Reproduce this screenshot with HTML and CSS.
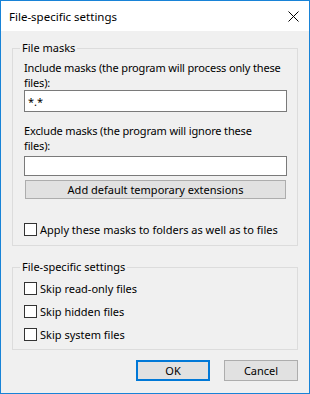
FILE: index.html
```html
<!DOCTYPE html>
<html lang="en">
<head>
    <meta charset="UTF-8">
    <title>File-specific settings</title>
    <link rel="stylesheet" href="styles.css">
</head>
<body>
    <div class="window">
        <div class="titlebar">
            <span class="title">File-specific settings</span>
            <span class="close">
                <svg width="11" height="11" viewBox="0 0 11 11"><path d="M0.5 0.5 L10.5 10.5 M10.5 0.5 L0.5 10.5" stroke="#000" stroke-width="1" fill="none"/></svg>
            </span>
        </div>
        <div class="content">
            <fieldset class="group masks">
                <legend>File masks</legend>
                <label class="field-label" for="include">Include masks (the program will process only these<br>files):</label>
                <input type="text" id="include" class="textbox tb-include" value="*.*">
                <label class="field-label lbl-exclude" for="exclude">Exclude masks (the program will ignore these<br>files):</label>
                <input type="text" id="exclude" class="textbox tb-exclude">
                <button class="btn btn-wide">Add default temporary extensions</button>
                <label class="check check-apply"><input type="checkbox"><span>Apply these masks to folders as well as to files</span></label>
            </fieldset>
            <fieldset class="group settings">
                <legend>File-specific settings</legend>
                <label class="check"><input type="checkbox"><span>Skip read-only files</span></label>
                <label class="check"><input type="checkbox"><span>Skip hidden files</span></label>
                <label class="check"><input type="checkbox"><span>Skip system files</span></label>
            </fieldset>
            <div class="actions">
                <button class="btn btn-default">OK</button>
                <button class="btn">Cancel</button>
            </div>
        </div>
    </div>
</body>
</html>
```

FILE: styles.css
```css
/* dialog window */
body {
    margin: 0;
    font-family: "Noto Sans", "DejaVu Sans", sans-serif;
    font-size: 11px;
    color: #000;
}

.window {
    width: 310px;
    height: 394px;
    box-sizing: border-box;
    border: 1px solid #1883d7;
    display: flex;
    flex-direction: column;
}

.titlebar {
    height: 30px;
    background-color: #fff;
    display: flex;
    align-items: center;
    justify-content: space-between;
    padding: 0 10px 0 8px;
    flex-shrink: 0;
}

.title {
    font-size: 11.5px;
}

.close {
    display: flex;
}

.content {
    flex: 1;
    background-color: #f0f0f0;
    padding: 0 11px;
    display: flex;
    flex-direction: column;
}

/* group boxes */
.group {
    margin: 9px 0 0;
    border: 1px solid #dcdcdc;
    padding: 4px 10px 0 11px;
    min-width: 0;
    display: flex;
    flex-direction: column;
}

.group legend {
    margin-left: -4px;
    padding: 0 2px;
    line-height: 16px;
}

.masks {
    height: 206px;
    box-sizing: border-box;
}

.settings {
    margin-top: 13px;
    height: 91px;
    box-sizing: border-box;
    padding-top: 2px;
}

.field-label {
    display: block;
    line-height: 15px;
    letter-spacing: -0.15px;
}

.lbl-exclude {
    margin-top: 11px;
}

.textbox {
    box-sizing: border-box;
    height: 22px;
    margin: 0;
    border: 1px solid #7a7a7a;
    padding: 0 3px;
    font-family: inherit;
    font-size: 11px;
    background: #fff;
    outline: none;
}

.tb-exclude {
    margin-top: 3px;
    height: 20px;
}

/* buttons */
.btn {
    box-sizing: border-box;
    height: 21px;
    border: 1px solid #adadad;
    background-color: #e1e1e1;
    font-family: inherit;
    font-size: 11px;
    color: #000;
    padding: 0;
}

.btn-wide {
    height: 19px;
    margin: 4px 1px 0;
}

.btn-default {
    border: 2px solid #0078d7;
}

.actions {
    display: flex;
    justify-content: flex-end;
    gap: 14px;
    margin-top: 10px;
}

.actions .btn {
    width: 74px;
}

/* checkboxes */
.check {
    display: flex;
    align-items: center;
    height: 23px;
}

.check-apply {
    margin-top: 19px;
}

.check input {
    appearance: none;
    width: 13px;
    height: 13px;
    margin: 0 3px 0 0;
    border: 1px solid #333;
    background: #fff;
}
```
